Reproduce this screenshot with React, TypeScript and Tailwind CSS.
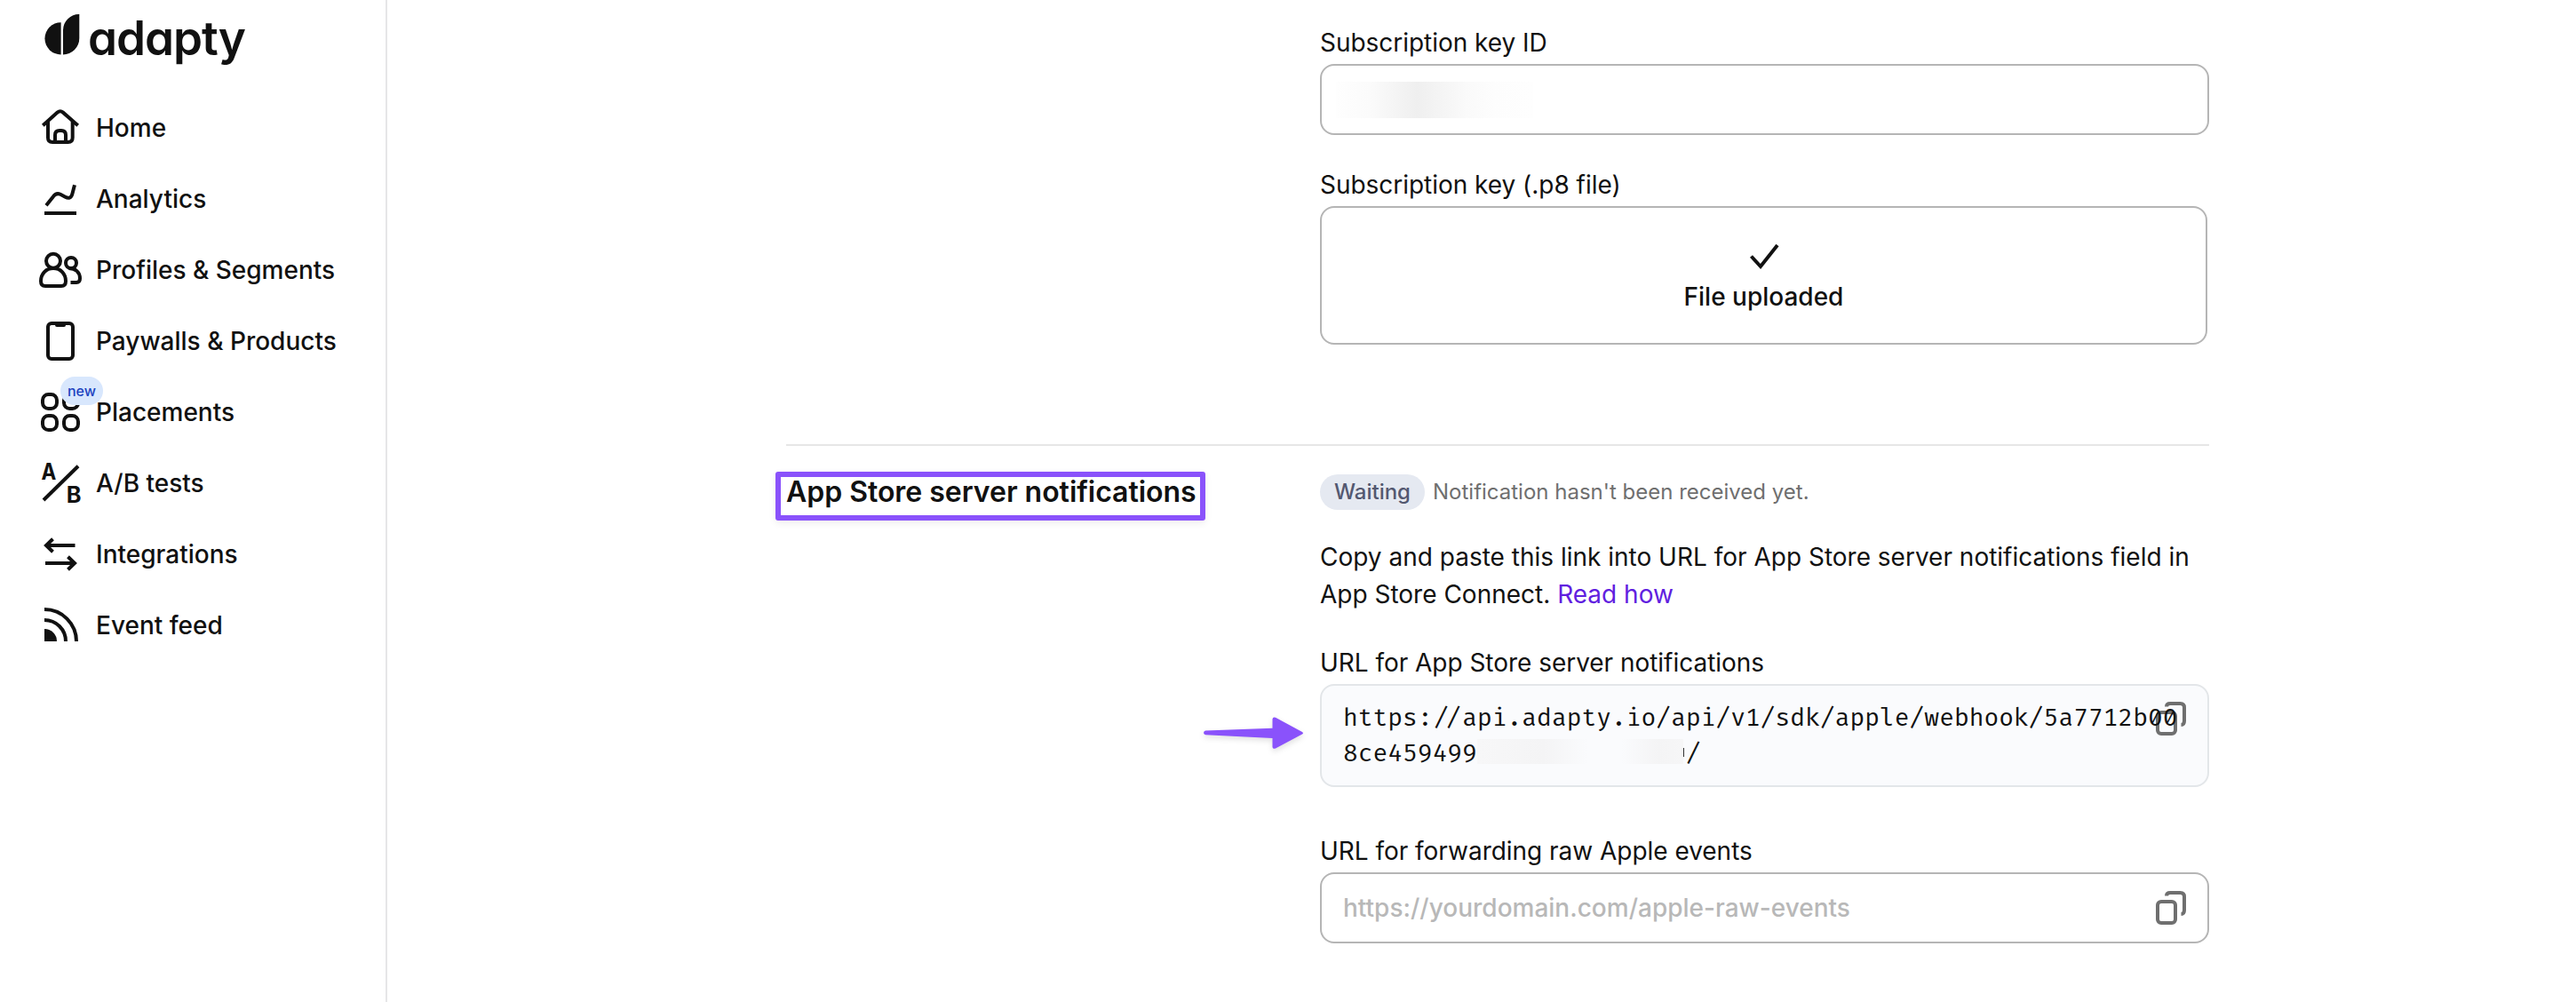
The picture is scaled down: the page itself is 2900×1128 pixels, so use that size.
import type { ReactNode } from "react";

const INK = "#111111";

function Icon({ children }: { children: ReactNode }) {
  return (
    <svg
      width="48"
      height="48"
      viewBox="0 0 48 48"
      fill="none"
      stroke={INK}
      strokeWidth="4"
      className="shrink-0 overflow-visible"
    >
      {children}
    </svg>
  );
}

const HomeIcon = () => (
  <Icon>
    <path d="M4.3 21.3 20.6 6.6Q23.8 3.9 27 6.6L43.7 21.3" />
    <path d="M10 17V35Q10 40 15 40H32.7Q37.7 40 37.7 35V17" />
    <path d="M18 40V32Q18 27 23 27H25Q30 27 30 32V40" />
  </Icon>
);

const AnalyticsIcon = () => (
  <Icon>
    <path d="M6 40H42" />
    <path d="M8 31.3 16 21.2Q19.3 16.6 24 18.8L29.5 21.8Q35.6 25 37.4 18.2L40 8.3" />
  </Icon>
);

const ProfilesIcon = () => (
  <Icon>
    <circle cx="16" cy="13.8" r="8" />
    <path d="M2 36.5C2 28 8 22 16 22S30 28 30 36.5Q30 42 25 42H7Q2 42 2 36.5Z" />
    <circle cx="36" cy="16" r="6" />
    <path d="M33.5 22C41 22 46 26.500 46 33.500Q46 38 42 38H35.500" />
  </Icon>
);

const PaywallsIcon = () => (
  <Icon>
    <rect x="10" y="4" width="28" height="40" rx="4" />
    <path d="M18 4H30V6Q30 8 28 8H20Q18 8 18 6Z" fill={INK} stroke="none" />
  </Icon>
);

const PlacementsIcon = () => (
  <Icon>
    <rect x="4" y="4" width="16" height="16" rx="6.500" />
    <rect x="28" y="4" width="16" height="16" rx="6.500" />
    <rect x="4" y="28" width="16" height="16" rx="6.500" />
    <rect x="28" y="28" width="16" height="16" rx="6.500" />
  </Icon>
);

const AbIcon = () => (
  <Icon>
    <path d="M5 43 44 4.800" />
    <g fill={INK} stroke="none" fontFamily="Inter, sans-serif" fontWeight="700" fontSize="25">
      <text x="2.600" y="19.800" textLength="16.800" lengthAdjust="spacingAndGlyphs">A</text>
      <text x="30.800" y="46" textLength="16.800" lengthAdjust="spacingAndGlyphs">B</text>
    </g>
  </Icon>
);

const IntegrationsIcon = () => (
  <Icon>
    <path d="M8 14H40.500M15.500 6.800 8 14 15.500 21.200" />
    <path d="M7 34H40M32.500 26.800 40 34 32.500 41.200" />
  </Icon>
);

const FeedIcon = () => (
  <Icon>
    <path d="M6 6A36 36 0 0 1 42 42M6 18A24 24 0 0 1 30 42" />
    <path d="M6 28A14 14 0 0 1 20 42H6Z" fill={INK} stroke="none" />
  </Icon>
);

const nav: { label: string; icon: ReactNode; isNew?: boolean }[] = [
  { label: "Home", icon: <HomeIcon /> },
  { label: "Analytics", icon: <AnalyticsIcon /> },
  { label: "Profiles & Segments", icon: <ProfilesIcon /> },
  { label: "Paywalls & Products", icon: <PaywallsIcon /> },
  { label: "Placements", icon: <PlacementsIcon />, isNew: true },
  { label: "A/B tests", icon: <AbIcon /> },
  { label: "Integrations", icon: <IntegrationsIcon /> },
  { label: "Event feed", icon: <FeedIcon /> },
];

function Logo() {
  return (
    <div className="flex pt-4">
      <svg width="40" height="46" viewBox="0 0 40 46" fill={INK} className="shrink-0">
        <path d="M18.600 9.200V45.500A18.150 18.150 0 0 1 18.600 9.200Z" />
        <path d="M21 45.500V18A18 18 0 0 1 39.300 0V27A18.400 18.400 0 0 1 21 45.500Z" />
      </svg>
      <span className="ml-[9px] text-[53px] leading-[54px] font-semibold tracking-[-1.1px] [font-feature-settings:'cv11']">
        adapty
      </span>
    </div>
  );
}

function Sidebar() {
  return (
    <aside className="h-full w-[436px] shrink-0 border-r-2 border-[#e6e6e8] pl-11">
      <div className="h-[104px] pl-1.5">
        <Logo />
      </div>
      <nav>
        {nav.map((item) => (
          <a key={item.label} className="relative flex h-20 items-center gap-4 text-[28px] font-medium">
            {item.icon}
            <span>{item.label}</span>
            {item.isNew && (
              <span className="absolute top-0 left-6 flex h-8 w-12 items-center justify-center rounded-full bg-[#d8e7fd] text-base font-medium text-[#1d43c0]">
                new
              </span>
            )}
          </a>
        ))}
      </nav>
    </aside>
  );
}

function CopyIcon() {
  return (
    <svg width="36" height="40" viewBox="0 0 36 40" fill="none" stroke="#6f6f6f" strokeWidth="4">
      <rect x="3" y="13" width="20" height="24" rx="4" />
      <path d="M13 6.500Q13 3 17 3H28.500Q33 3 33 7.500V22.500Q33 27 29.500 27" />
    </svg>
  );
}

function Label({ children }: { children: ReactNode }) {
  return <p className="mb-1 text-[28px] leading-10 tracking-[-0.03px]">{children}</p>;
}

function Arrow() {
  return (
    <svg
      width="114"
      height="38"
      viewBox="0 0 114 38"
      fill="#8a52fb"
      className="absolute top-[34px] -left-[134px] drop-shadow-[0_3px_3px_rgba(0,0,0,0.12)]"
    >
      <path d="M3 16.600 78.500 13.700V3.500Q79 .6 82 1.800L112 18Q114 19.300 112 20.600L82 36.500Q79 37.700 78.500 35V25L3 21.200Q1 20.500 1 19T3 16.600Z" />
    </svg>
  );
}

export default function App() {
  return (
    <div className="flex h-[1128px] w-[2900px] overflow-hidden bg-white font-['Inter',sans-serif] text-[#111111]">
      <Sidebar />
      <main className="w-[2051px] pl-[449px]">
        <section className="ml-[601px] pt-7">
          <Label>Subscription key ID</Label>
          <div className="flex h-20 w-[1001px] items-center rounded-2xl border-2 border-[#b5b5b5] pl-4">
            <div className="h-[41px] w-[222px] bg-[linear-gradient(90deg,#fefefe_0%,#fbfbfb_17%,#f3f3f3_33%,#efefef_41%,#f4f4f4_52%,#fafafa_66%,#fdfdfd_80%,#fefefe_100%)]" />
          </div>
          <div className="pt-9">
            <Label>Subscription key (.p8 file)</Label>
            <div className="flex h-[156px] w-[999px] flex-col items-center rounded-2xl border-2 border-[#b5b5b5] pt-[37px]">
              <svg width="36" height="36" viewBox="0 0 36 36" fill="none" stroke={INK} strokeWidth="4">
                <path d="M3.500 17.500 14 29 33 5" />
              </svg>
              <p className="mt-[7px] text-[28px] leading-10 font-medium">File uploaded</p>
            </div>
          </div>
        </section>

        <section className="mt-28 flex w-[1602px] border-t-2 border-[#e6e6e6] pt-8">
          <div className="w-[601px] shrink-0">
            <h2 className="-mt-[3px] -ml-3 h-[55px] w-[484px] rounded-[3px] border-[6px] border-[#8a52fb] pl-1.5 text-[32px] leading-[34px] font-semibold tracking-[-0.03px] whitespace-nowrap shadow-[0_3px_8px_rgba(0,0,0,0.07)]">
              App Store server notifications
            </h2>
          </div>
          <div className="w-[1001px]">
            <div className="flex h-10 items-center gap-[9px] text-2xl">
              <span className="flex h-10 w-[118px] items-center justify-center rounded-full bg-[#e5e9f1] font-medium text-[#535870]">
                Waiting
              </span>
              <span className="text-[#6f6f6f]">Notification hasn't been received yet.</span>
            </div>
            <p className="mt-8 text-[28px] leading-[42px]">
              Copy and paste this link into URL for App Store server notifications field in
              <br />
              App Store Connect. <a className="text-[#6020df]">Read how</a>
            </p>
            <div className="pt-9">
              <Label>URL for App Store server notifications</Label>
              <div className="relative h-[116px] rounded-2xl border-2 border-[#e3e6e9] bg-[#fafbfd] pt-[17px] pl-6 font-['Fira_Code','Liberation_Mono',monospace] text-[27.28px] leading-10">
                <Arrow />
                <div className="absolute top-[17px] right-[23px]">
                  <CopyIcon />
                </div>
                <p className="relative whitespace-nowrap">https://api.adapty.io/api/v1/sdk/apple/webhook/5a7712b00</p>
                <div className="relative flex items-center whitespace-nowrap">
                  <span>8ce459499</span>
                  <span className="flex h-7 w-[232px] -translate-y-[3px] items-center justify-between">
                    <span className="h-7 w-[125px] bg-[linear-gradient(90deg,#f7f7f8,#f4f4f5_60%,#fafbfd)]" />
                    <span className="h-7 w-[70px] bg-[linear-gradient(90deg,#fafbfd,#f4f4f5_60%,#f6f6f7)]" />
                  </span>
                  <span className="mr-0.5 h-2.5 w-px -translate-y-0.5 bg-[#333333]" />
                  <span>/</span>
                </div>
              </div>
            </div>
            <div className="pt-[52px]">
              <Label>URL for forwarding raw Apple events</Label>
              <div className="flex h-20 items-center justify-between rounded-2xl border-2 border-[#b5b5b5] pr-[23px] pl-6 text-[28px] font-medium text-[#b8b8b8]">
                <span>https://yourdomain.com/apple-raw-events</span>
                <CopyIcon />
              </div>
            </div>
          </div>
        </section>
      </main>
    </div>
  );
}
